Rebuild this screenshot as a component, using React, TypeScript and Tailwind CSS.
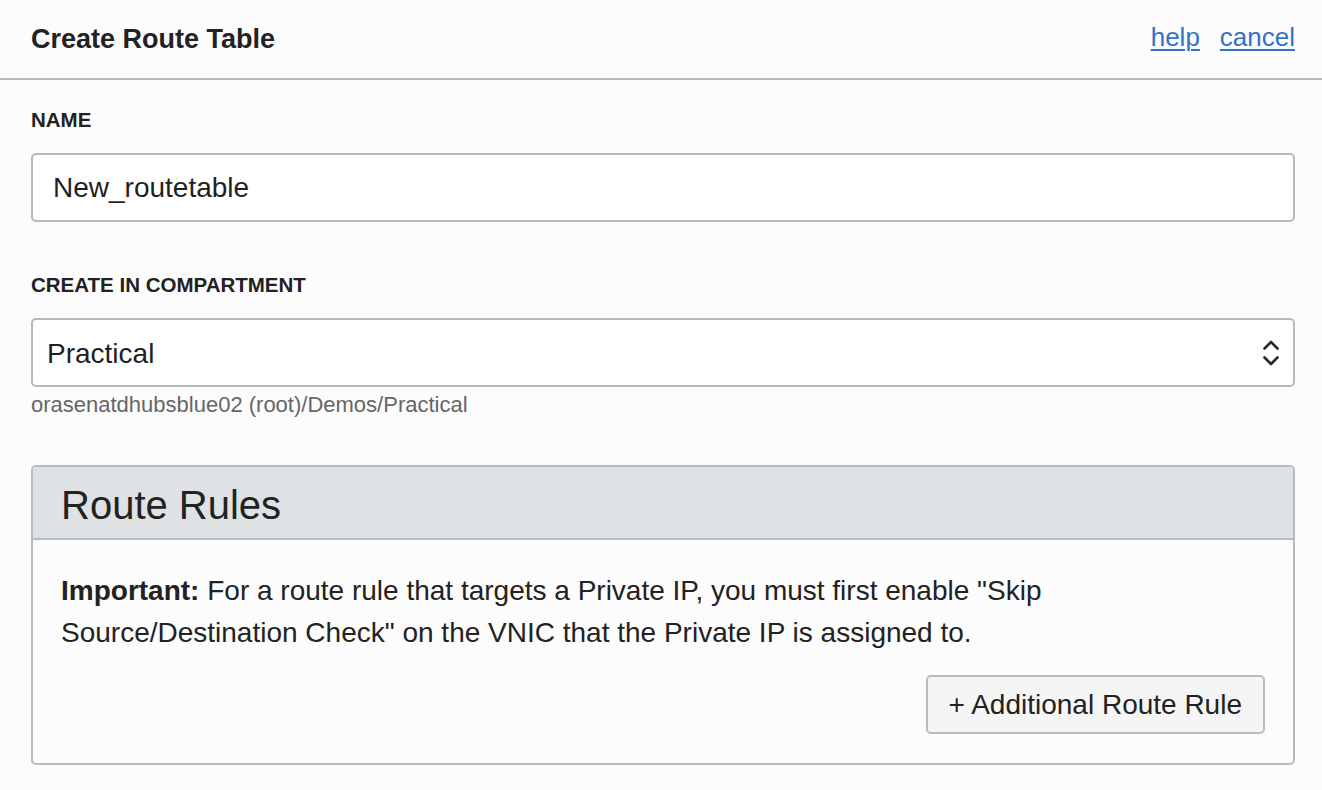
import React from "react";

export default function App() {
  return (
    <div
      className="w-full h-[790px] bg-[#fcfcfc] text-[#1f1f1f] overflow-hidden"
      style={{ fontFamily: '"Liberation Sans", Arial, sans-serif' }}
    >
      <header className="h-[80px] pl-[31px] pr-[27px] flex items-center justify-between border-b-2 border-[#b7babe]">
        <h1 className="text-[27px] font-bold leading-none text-[#222]">Create Route Table</h1>
        <nav className="flex items-center gap-[20px] text-[26px] leading-none pb-[4px]">
          <a href="#" className="text-[#3173c6] underline underline-offset-[3px] decoration-[1.5px]">help</a>
          <a href="#" className="text-[#3173c6] underline underline-offset-[3px] decoration-[1.5px]">cancel</a>
        </nav>
      </header>

      <main className="pr-[27px] pl-[31px]">
        <label className="block mt-[30px] text-[20.5px] leading-[20px] font-bold text-[#222]">NAME</label>
        <div className="mt-[23px] h-[69px] bg-white border-2 border-[#b5b9bd] rounded-[5px] flex items-center pl-[20px] pt-[1px] text-[28px]">
          New_routetable
        </div>

        <label className="block mt-[53px] text-[20.5px] leading-[20px] font-bold text-[#222]">CREATE IN COMPARTMENT</label>
        <div className="mt-[23px] h-[69px] bg-white border-2 border-[#b5b9bd] rounded-[5px] flex items-center justify-between pl-[14px] pr-[13px] text-[28px]">
          <span className="pt-[3px]">Practical</span>
          <svg width="18" height="28" viewBox="0 0 18 28" fill="none" stroke="#2a2a2a" strokeWidth="2.6" strokeLinecap="round" strokeLinejoin="round">
            <path d="M2.5 9.5 L9 3 L15.5 9.5" />
            <path d="M2.5 18.5 L9 25 L15.5 18.5" />
          </svg>
        </div>
        <p className="mt-[5px] text-[22px] leading-[26px] text-[#666]">orasenatdhubsblue02 (root)/Demos/Practical</p>

        <section className="mt-[47px] border-2 border-[#b8bcc0] rounded-[5px] overflow-hidden">
          <div className="h-[73px] bg-[#dfe2e5] border-b-2 border-[#b8bcc0] flex items-center pl-[28px] pt-[5px]">
            <h2 className="text-[40px] leading-none text-[#222]">Route Rules</h2>
          </div>
          <div className="pt-[30px] pl-[28px] pr-[28px] pb-[29px]">
            <p className="text-[28px] leading-[42px] text-[#222]">
              <strong className="font-bold">Important:</strong> For a route rule that targets a Private IP, you must first enable "Skip
              <br />
              Source/Destination Check" on the VNIC that the Private IP is assigned to.
            </p>
            <div className="mt-[21px] flex justify-end">
              <button className="h-[59px] pl-[21px] pr-[21px] bg-[#f5f5f5] border-2 border-[#b8bcc0] rounded-[5px] text-[28px] leading-none text-[#222]">
                + Additional Route Rule
              </button>
            </div>
          </div>
        </section>
      </main>
    </div>
  );
}
